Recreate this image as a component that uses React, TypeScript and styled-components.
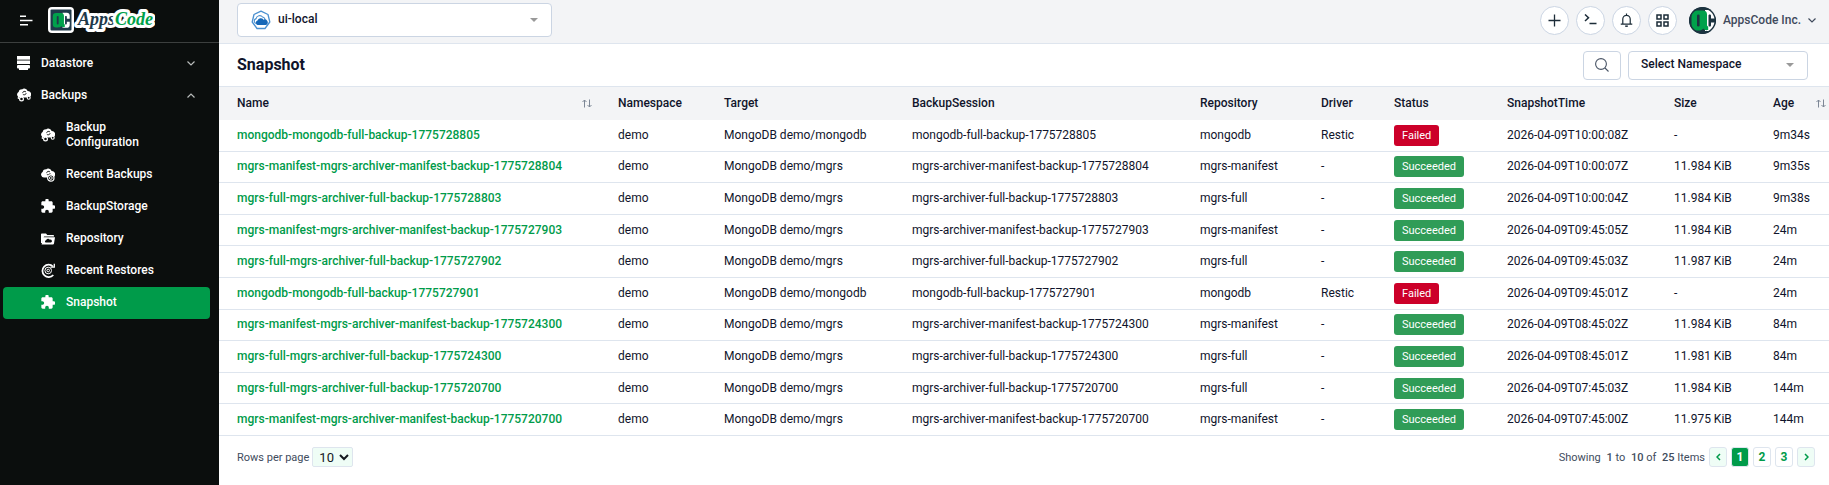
import React from 'react';
import styled, { createGlobalStyle, css } from 'styled-components';
import { MdExtension } from 'react-icons/md';

const GlobalStyle = createGlobalStyle`
  *, *::before, *::after { box-sizing: border-box; }
  body {
    margin: 0;
    background: #fff;
    color: #10142b;
    font-family: Roboto, "Liberation Sans", sans-serif;
    font-size: 12px;
    line-height: 15px;
  }
  button, select { font: inherit; color: inherit; }
  a { text-decoration: none; }
  svg { display: block; flex: none; }
`;

const line = '#dee5ee';
const control = '#cbd5e3';
const green = '#009b4a';

const Shell = styled.div`
  display: flex;
  min-height: 100vh;
`;

/* ---------- sidebar ---------- */

const Sidebar = styled.aside`
  flex: none;
  width: 219px;
  background: #0b0e0d;
  color: #fff;
`;

const Brand = styled.div`
  display: flex;
  align-items: center;
  gap: 14px;
  height: 43px;
  padding: 0 20px 2px;
  border-bottom: 1px solid #3c3f3e;
`;

const MenuToggle = styled.button`
  display: flex;
  padding: 0;
  border: 0;
  background: none;
  cursor: pointer;
`;

const Nav = styled.nav`
  display: flex;
  flex-direction: column;
  padding: 4px 9px 0 3px;
`;

const SubNav = styled.div`
  display: flex;
  flex-direction: column;
  padding-top: 1px;
`;

const itemStyle = css`
  display: flex;
  align-items: center;
  width: 100%;
  min-height: 32px;
  border: 0;
  border-radius: 4px;
  color: #fff;
  font-weight: 500;
  text-align: left;
  cursor: pointer;
`;

const NavGroup = styled.button`
  ${itemStyle}
  gap: 10px;
  padding: 0 15px 0 14px;
  background: none;
`;

const NavLabel = styled.span`
  flex: 1;
`;

const NavItem = styled.a<{ $active?: boolean }>`
  ${itemStyle}
  gap: 11px;
  padding: 8px 40px 9px 38px;
  background: ${(p) => (p.$active ? green : 'transparent')};
`;

/* ---------- top bar ---------- */

const Content = styled.div`
  flex: 1;
  min-width: 0;
  display: flex;
  flex-direction: column;
`;

const TopBar = styled.header`
  display: flex;
  align-items: center;
  justify-content: space-between;
  height: 44px;
  padding: 0 13px 3px 18px;
  background: #f3f4f6;
  border-bottom: 1px solid ${line};
`;

const Group = styled.div<{ $gap: number }>`
  display: flex;
  align-items: center;
  gap: ${(p) => p.$gap}px;
`;

const SelectBox = styled.div<{ $width: number }>`
  position: relative;
  width: ${(p) => p.$width}px;
`;

const Dropdown = styled.select<{ $height: number; $indent: number }>`
  display: block;
  width: 100%;
  height: ${(p) => p.$height}px;
  padding: 0 30px 2px ${(p) => p.$indent}px;
  appearance: none;
  border: 1px solid ${control};
  border-radius: 4px;
  background: #fff;
  font-weight: 500;
`;

const Adornment = styled.span<{ $side: 'left' | 'right' }>`
  position: absolute;
  top: 0;
  bottom: 0;
  ${(p) => (p.$side === 'left' ? 'left: 14px;' : 'right: 14px;')}
  display: flex;
  align-items: center;
  pointer-events: none;
`;

const RoundButton = styled.button`
  display: flex;
  align-items: center;
  justify-content: center;
  width: 29px;
  height: 29px;
  padding: 0;
  border: 1px solid ${control};
  border-radius: 50%;
  background: #fff;
  color: #1c2c38;
  cursor: pointer;
`;

const Account = styled.button`
  display: flex;
  align-items: center;
  gap: 7px;
  margin-left: 5px;
  padding: 0;
  border: 0;
  background: none;
  color: #3f4a5c;
  font-weight: 500;
  cursor: pointer;
`;

/* ---------- page header ---------- */

const TitleBar = styled.div`
  display: flex;
  align-items: center;
  justify-content: space-between;
  height: 43px;
  padding: 0 21px 0 18px;
  border-bottom: 1px solid ${line};
`;

const Title = styled.h1`
  margin: 0;
  font-size: 16px;
  line-height: 20px;
  font-weight: 700;
`;

const SearchButton = styled.button`
  display: flex;
  align-items: center;
  justify-content: center;
  width: 38px;
  height: 29px;
  padding: 0;
  border: 1px solid ${control};
  border-radius: 4px;
  background: #fff;
  color: #4a5566;
  cursor: pointer;
`;

/* ---------- table ---------- */

const Table = styled.table`
  width: 100%;
  height: 349px;
  table-layout: fixed;
  border-collapse: separate;
  border-spacing: 0;
`;

const Col = styled.col<{ $width: number }>`
  width: ${(p) => p.$width}px;
`;

const HeadCell = styled.th`
  height: 33px;
  padding: 0 8px 0 18px;
  background: #f3f4f6;
  font-weight: 500;
  text-align: left;
  &:last-child { padding-right: 3px; }
`;

const HeadLabel = styled.div`
  display: flex;
  align-items: center;
  justify-content: space-between;
`;

const Cell = styled.td`
  height: 31px;
  padding: 0 0 0 18px;
  border-bottom: 1px solid ${line};
  white-space: nowrap;
`;

const NameLink = styled.a`
  color: ${green};
  font-weight: 500;
`;

const Status = styled.span<{ $failed: boolean }>`
  display: block;
  width: fit-content;
  padding: 0 8px;
  border-radius: 3px;
  background: ${(p) => (p.$failed ? '#cc0029' : '#309c57')};
  color: #fff;
  font-size: 11px;
  line-height: 21px;
`;

/* ---------- footer ---------- */

const Footer = styled.footer`
  display: flex;
  align-items: center;
  justify-content: space-between;
  padding: 11px 14px 16px 18px;
  color: #414c5d;
  font-size: 11px;
`;

const RowsSelect = styled.select`
  width: 41px;
  height: 20px;
  padding: 0 0 0 2px;
  border: 1px solid ${line};
  border-radius: 2px;
  background: #effdf6;
  color: #14181f;
  font-size: 13px;
`;

const Count = styled.span`
  margin-left: 3px;
  font-weight: 500;
`;

const PageButton = styled.button<{ $kind?: 'arrow' | 'current' }>`
  display: flex;
  align-items: center;
  justify-content: center;
  width: 18px;
  height: 20px;
  padding: 0;
  border: 1px solid ${line};
  border-radius: 3px;
  background: ${(p) => (p.$kind === 'current' ? green : p.$kind === 'arrow' ? '#effdf6' : '#fff')};
  color: ${(p) => (p.$kind === 'current' ? '#fff' : green)};
  font-size: 12px;
  font-weight: 700;
  cursor: pointer;
`;

/* ---------- drawings ---------- */

const Monogram = ({ dark }: { dark: string }) => (
  <g>
    <path d="M16 3h6c2.500 0 4 1.500 4 4v4.500h-4V9c0-1-.3-1.500-1.300-1.500S19.500 8 19.500 9v9c0 1 .3 1.500 1.200 1.500S22 19 22 18v-2.500h4V20c0 2.500-1.500 4-4 4h-6z" fill="#fff" />
    <path d="M7 3.500h7c2.600 0 4 1.500 4 4v10.300c0 1 .3 1.500 1.200 1.700V23c-2.400.4-4 0-5-1.500-1 1.500-2.500 2-4.700 2H7c-3 0-4.500-1.500-4.500-4.500v-11c0-3 1.500-4.500 4.500-4.500z" fill="#00a14b" />
    <rect x="8" y="7.500" width="2.600" height="12" rx="1.300" fill={dark} />
  </g>
);

const Logo = () => (
  <svg width="108" height="28" viewBox="0 0 108 28" role="img" aria-label="AppsCode">
    <rect x="1" y="1" width="26" height="26" rx="4" fill="#fff" />
    <rect x="3.500" y="3.500" width="21" height="21" rx="1" fill="#1f3a4a" />
    <g transform="translate(4 4.500) scale(.72)">
      <Monogram dark="#1f3a4a" />
    </g>
    <text
      x="31"
      y="19"
      fontFamily='"Liberation Serif", serif'
      fontSize="18"
      fontWeight="700"
      fontStyle="italic"
      stroke="#fff"
      strokeWidth="6"
      strokeLinejoin="round"
      paintOrder="stroke"
    >
      <tspan fill="#1f3a4a">Apps</tspan><tspan fill="#00a14b">Code</tspan>
    </text>
  </svg>
);

const Avatar = () => (
  <svg width="27" height="27" viewBox="0 0 27 27" aria-hidden="true">
    <clipPath id="avatar-disc">
      <circle cx="13.500" cy="13.500" r="13.500" />
    </clipPath>
    <g clipPath="url(#avatar-disc)">
      <rect width="27" height="27" fill="#1c3340" />
      <Monogram dark="#1c3340" />
      <circle cx="13.500" cy="13.500" r="12.800" fill="none" stroke="#1c3340" strokeWidth="1.500" />
    </g>
  </svg>
);

const Hamburger = () => (
  <svg width="13" height="11" viewBox="0 0 13 11" fill="none" stroke="#fff" strokeWidth="1.600">
    <path d="M0 1.200h6M0 5.500h12.500M0 9.800h8" />
  </svg>
);

const DatastoreIcon = () => (
  <svg width="14" height="14" viewBox="0 0 14 14" fill="#fff">
    <rect x="0" y="0" width="13" height="3" />
    <rect x="0" y="3" width="13" height="1" fill="#a9abaa" />
    <rect x="0" y="4.500" width="13" height="3.500" />
    <rect x="0" y="9" width="13" height="3.500" rx="1" />
    <rect x="2" y="12" width="9" height="2" />
  </svg>
);

const cloud = 'M3 9.600A3 3 0 0 1 1.600 4 3 3 0 0 1 5 1.400 3.600 3.600 0 0 1 10.600 3a3.300 3.300 0 0 1 2.800 5.400L12 9.600z';

const BackupIcon = () => (
  <svg width="14" height="14" viewBox="0 0 14 14">
    <path d={cloud} fill="#fff" />
    <path d="M5.600 4.800a2 2 0 0 1 3.400-.8M9.200 5.200A2 2 0 0 1 5.800 6.200" fill="none" stroke="#0b0e0d" strokeWidth=".9" />
    <circle cx="4.500" cy="11" r="1.900" fill="#0b0e0d" stroke="#fff" strokeWidth="1.200" />
    <circle cx="11.700" cy="9.800" r="1.500" fill="#0b0e0d" stroke="#fff" strokeWidth="1.100" />
    <circle cx="1.500" cy="10" r=".9" fill="#fff" />
  </svg>
);

const RecentBackupIcon = () => (
  <svg width="14" height="14" viewBox="0 0 14 14">
    <path d={cloud} fill="#fff" />
    <path d="M5.600 4.800a2 2 0 0 1 3.400-.8M9.200 5.200A2 2 0 0 1 5.800 6.200" fill="none" stroke="#0b0e0d" strokeWidth=".9" />
    <circle cx="9.800" cy="10" r="3.200" fill="#0b0e0d" stroke="#fff" strokeWidth="1.200" />
    <circle cx="9.800" cy="10" r="1.400" fill="none" stroke="#fff" strokeWidth=".9" />
  </svg>
);

const RepositoryIcon = () => (
  <svg width="14" height="14" viewBox="0 0 14 14">
    <path d="M0 2.500C0 1.900.4 1.500 1 1.500h4l1.300 1.400H12c.6 0 1 .4 1 1v.6H3L1.200 11H0z" fill="#fff" />
    <path d="M2.200 5.200H14l-1 6.300c-.1.600-.5 1-1.100 1H.6z" fill="#fff" />
    <path d="M4.600 10.600a1.300 1.300 0 0 1 .5-2.400 2 2 0 0 1 3.700-.4 1.500 1.500 0 0 1 1.200 2.800z" fill="#0b0e0d" />
  </svg>
);

const RestoreIcon = () => (
  <svg width="14" height="15" viewBox="0 0 14 15" fill="none" stroke="#fff">
    <path d="M12 3.500A6.200 6.200 0 1 0 12.300 12" strokeWidth="1.700" />
    <path d="M9.500 4.200h3.800V.8" strokeWidth="1.300" />
    <circle cx="7.200" cy="7.500" r="3.300" strokeWidth="1" />
    <circle cx="7.200" cy="7.500" r="1.300" strokeWidth="1" />
  </svg>
);

const PuzzleIcon = () => (
  <svg width="14" height="15" viewBox="0 0 14 15">
    <MdExtension x="-1" y="-1" size={16} />
  </svg>
);

const Chevron = ({ up = false, color = '#b9bcbb' }: { up?: boolean; color?: string }) => (
  <svg width="8" height="5" viewBox="0 0 8 5" fill="none" stroke={color} strokeWidth="1.200">
    <path d={up ? 'M.5 4.500 4 1l3.500 3.500' : 'M.5.500 4 4 7.500.500'} />
  </svg>
);

const Caret = () => (
  <svg width="8" height="4" viewBox="0 0 8 4" fill="#999">
    <path d="M0 0h8L4 4z" />
  </svg>
);

const ClusterIcon = () => (
  <svg width="20" height="21" viewBox="0 0 20 21">
    <path d="M10 1.200 17 4.500 18.800 12 14 18.500 6 18.500 1.200 12 3 4.500z" fill="#fff" stroke="#4a90d0" strokeWidth="1.300" strokeLinejoin="round" />
    <path d="M5.500 13.500a2.500 2.500 0 0 1-.4-4.900A3.700 3.700 0 0 1 11.600 7 3 3 0 0 1 14 10" fill="none" stroke="#4a90d0" strokeWidth="1.100" />
    <path d="M6.500 15a2.300 2.300 0 0 1 0-4.400 3.400 3.400 0 0 1 6-.8 2.700 2.700 0 0 1 2.600 5.200z" fill="#1668b8" />
  </svg>
);

const PlusIcon = () => (
  <svg width="13" height="13" viewBox="0 0 13 13" stroke="currentColor" strokeWidth="1.300">
    <path d="M6.500.500v12M.5 6.500h12" />
  </svg>
);

const TerminalIcon = () => (
  <svg width="13" height="12" viewBox="0 0 13 12" fill="none" stroke="currentColor" strokeWidth="1.500">
    <path d="M1 .500l3.500 3.200L1 7M5.500 9.500h7" />
  </svg>
);

const BellIcon = () => (
  <svg width="13" height="15" viewBox="0 0 14 15" fill="none" stroke="currentColor" strokeWidth="1.300">
    <path d="M7 0v1.800M3 11V6a4 4 0 0 1 8 0v5M.8 11.300h12.400" />
    <path d="M5.600 13.600h2.800" strokeWidth="1.600" />
  </svg>
);

const GridIcon = () => (
  <svg width="13" height="13" viewBox="0 0 13 13" fill="none" stroke="currentColor" strokeWidth="1.500">
    <path d="M1 1h4v4H1zM8 1h4v4H8zM1 8h4v4H1zM8 8h4v4H8z" />
  </svg>
);

const SearchIcon = () => (
  <svg width="14" height="14" viewBox="0 0 14 14" fill="none" stroke="currentColor" strokeWidth="1.100">
    <circle cx="6" cy="6" r="5.400" />
    <path d="M10 10l3.500 3.500" />
  </svg>
);

const SortIcon = () => (
  <svg width="10" height="9" viewBox="0 0 10 9" fill="none" stroke="#7d8796" strokeWidth="1">
    <path d="M2.500 8.500V1M.5 3 2.500 1l2 2M7.500.500V8M5.500 6l2 2 2-2" />
  </svg>
);

const PageArrow = ({ next = false }: { next?: boolean }) => (
  <svg width="5" height="8" viewBox="0 0 5 8" fill="none" stroke="currentColor" strokeWidth="1.500">
    <path d={next ? 'M1 1l3 3-3 3' : 'M4 1 1 4l3 3'} />
  </svg>
);

/* ---------- data ---------- */

const columns = [
  { label: 'Name', width: 381, sortable: true },
  { label: 'Namespace', width: 106 },
  { label: 'Target', width: 188 },
  { label: 'BackupSession', width: 288 },
  { label: 'Repository', width: 121 },
  { label: 'Driver', width: 73 },
  { label: 'Status', width: 113 },
  { label: 'SnapshotTime', width: 167 },
  { label: 'Size', width: 99 },
  { label: 'Age', width: 74, sortable: true },
];

type Kind = 'mongodb' | 'manifest' | 'full';

const kinds = {
  mongodb: { prefix: 'mongodb-', session: 'mongodb-full-backup-', target: 'MongoDB demo/mongodb', repository: 'mongodb', driver: 'Restic', status: 'Failed' },
  manifest: { prefix: 'mgrs-manifest-', session: 'mgrs-archiver-manifest-backup-', target: 'MongoDB demo/mgrs', repository: 'mgrs-manifest', driver: '-', status: 'Succeeded' },
  full: { prefix: 'mgrs-full-', session: 'mgrs-archiver-full-backup-', target: 'MongoDB demo/mgrs', repository: 'mgrs-full', driver: '-', status: 'Succeeded' },
};

const snapshots: { kind: Kind; id: string; time: string; size: string; age: string }[] = [
  { kind: 'mongodb', id: '1775728805', time: '2026-04-09T10:00:08Z', size: '-', age: '9m34s' },
  { kind: 'manifest', id: '1775728804', time: '2026-04-09T10:00:07Z', size: '11.984 KiB', age: '9m35s' },
  { kind: 'full', id: '1775728803', time: '2026-04-09T10:00:04Z', size: '11.984 KiB', age: '9m38s' },
  { kind: 'manifest', id: '1775727903', time: '2026-04-09T09:45:05Z', size: '11.984 KiB', age: '24m' },
  { kind: 'full', id: '1775727902', time: '2026-04-09T09:45:03Z', size: '11.987 KiB', age: '24m' },
  { kind: 'mongodb', id: '1775727901', time: '2026-04-09T09:45:01Z', size: '-', age: '24m' },
  { kind: 'manifest', id: '1775724300', time: '2026-04-09T08:45:02Z', size: '11.984 KiB', age: '84m' },
  { kind: 'full', id: '1775724300', time: '2026-04-09T08:45:01Z', size: '11.981 KiB', age: '84m' },
  { kind: 'full', id: '1775720700', time: '2026-04-09T07:45:03Z', size: '11.984 KiB', age: '144m' },
  { kind: 'manifest', id: '1775720700', time: '2026-04-09T07:45:00Z', size: '11.975 KiB', age: '144m' },
];

const backupLinks = [
  { label: 'Backup Configuration', Icon: BackupIcon },
  { label: 'Recent Backups', Icon: RecentBackupIcon },
  { label: 'BackupStorage', Icon: PuzzleIcon },
  { label: 'Repository', Icon: RepositoryIcon },
  { label: 'Recent Restores', Icon: RestoreIcon },
  { label: 'Snapshot', Icon: PuzzleIcon, active: true },
];

export default function App() {
  return (
    <>
      <GlobalStyle />
      <Shell>
        <Sidebar>
          <Brand>
            <MenuToggle aria-label="Toggle menu"><Hamburger /></MenuToggle>
            <Logo />
          </Brand>
          <Nav>
            <NavGroup aria-expanded={false}>
              <DatastoreIcon />
              <NavLabel>Datastore</NavLabel>
              <Chevron />
            </NavGroup>
            <NavGroup aria-expanded>
              <BackupIcon />
              <NavLabel>Backups</NavLabel>
              <Chevron up />
            </NavGroup>
            <SubNav>
              {backupLinks.map(({ label, Icon, active }) => (
                <NavItem key={label} href="#" $active={active}>
                  <Icon />
                  <span>{label}</span>
                </NavItem>
              ))}
            </SubNav>
          </Nav>
        </Sidebar>

        <Content>
          <TopBar>
            <SelectBox $width={315}>
              <Dropdown $height={34} $indent={40} aria-label="Cluster">
                <option>ui-local</option>
              </Dropdown>
              <Adornment $side="left"><ClusterIcon /></Adornment>
              <Adornment $side="right"><Caret /></Adornment>
            </SelectBox>
            <Group $gap={7}>
              <RoundButton aria-label="Create"><PlusIcon /></RoundButton>
              <RoundButton aria-label="Terminal"><TerminalIcon /></RoundButton>
              <RoundButton aria-label="Notifications"><BellIcon /></RoundButton>
              <RoundButton aria-label="Applications"><GridIcon /></RoundButton>
              <Account>
                <Avatar />
                AppsCode Inc.
                <Chevron color="#3f4a5c" />
              </Account>
            </Group>
          </TopBar>

          <main>
            <TitleBar>
              <Title>Snapshot</Title>
              <Group $gap={7}>
                <SearchButton aria-label="Search"><SearchIcon /></SearchButton>
                <SelectBox $width={180}>
                  <Dropdown $height={29} $indent={12} aria-label="Namespace">
                    <option>Select Namespace</option>
                  </Dropdown>
                  <Adornment $side="right"><Caret /></Adornment>
                </SelectBox>
              </Group>
            </TitleBar>

            <Table>
              <colgroup>
                {columns.map((c) => <Col key={c.label} $width={c.width} />)}
              </colgroup>
              <thead>
                <tr>
                  {columns.map((c) => (
                    <HeadCell key={c.label} scope="col">
                      <HeadLabel>{c.label}{c.sortable && <SortIcon />}</HeadLabel>
                    </HeadCell>
                  ))}
                </tr>
              </thead>
              <tbody>
                {snapshots.map((s) => {
                  const k = kinds[s.kind];
                  const name = k.prefix + k.session + s.id;
                  return (
                    <tr key={name}>
                      <Cell><NameLink href="#">{name}</NameLink></Cell>
                      <Cell>demo</Cell>
                      <Cell>{k.target}</Cell>
                      <Cell>{k.session + s.id}</Cell>
                      <Cell>{k.repository}</Cell>
                      <Cell>{k.driver}</Cell>
                      <Cell><Status $failed={k.status === 'Failed'}>{k.status}</Status></Cell>
                      <Cell>{s.time}</Cell>
                      <Cell>{s.size}</Cell>
                      <Cell>{s.age}</Cell>
                    </tr>
                  );
                })}
              </tbody>
            </Table>

            <Footer>
              <Group $gap={3}>
                <label htmlFor="rows">Rows per page</label>
                <RowsSelect id="rows" defaultValue="10">
                  <option>10</option>
                </RowsSelect>
              </Group>
              <Group $gap={4}>
                <span>
                  Showing <Count>1</Count> to <Count>10</Count> of <Count>25</Count> Items
                </span>
                <PageButton $kind="arrow" aria-label="Previous page"><PageArrow /></PageButton>
                <PageButton $kind="current" aria-current="page">1</PageButton>
                <PageButton>2</PageButton>
                <PageButton>3</PageButton>
                <PageButton $kind="arrow" aria-label="Next page"><PageArrow next /></PageButton>
              </Group>
            </Footer>
          </main>
        </Content>
      </Shell>
    </>
  );
}
